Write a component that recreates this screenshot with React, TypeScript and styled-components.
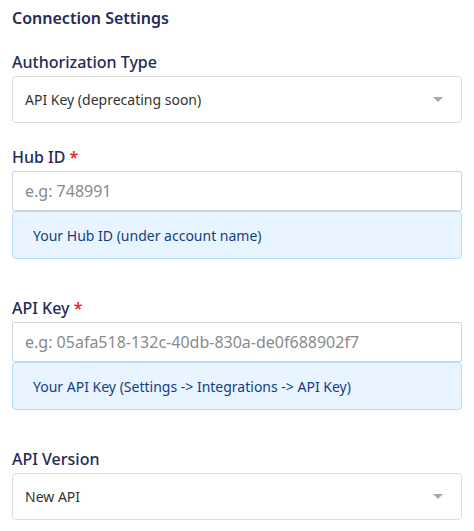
import {FC} from 'react';
import styled, {createGlobalStyle} from 'styled-components';

const Global = createGlobalStyle`
    body {
        margin: 0;
        background: #ffffff;
        font-family: "Noto Sans", "Open Sans", sans-serif;
    }
`;

const Page = styled.div`
    padding: 6px 12px 0 12px;
    display: flex;
    flex-direction: column;
`;

const Title = styled.div`
    font-size: 16px;
    font-weight: 600;
    line-height: 24px;
    color: #262a55;
    margin-bottom: 20px;
`;

const Field = styled.div<{gap?: number}>`
    display: flex;
    flex-direction: column;
    margin-bottom: ${p => p.gap ?? 0}px;
`;

const Label = styled.div`
    font-size: 16px;
    font-weight: 500;
    line-height: 24px;
    color: #262a55;
    margin-bottom: 2px;
    span {
        color: #e8262b;
        font-weight: 600;
    }
`;

const Select = styled.div`
    height: 47px;
    box-sizing: border-box;
    border: 1px solid #dedede;
    border-radius: 4px;
    display: flex;
    align-items: center;
    justify-content: space-between;
    padding: 0 18px 0 12px;
    font-size: 14px;
    color: #333333;
`;

const Arrow = styled.div`
    width: 0;
    height: 0;
    border-left: 5px solid transparent;
    border-right: 5px solid transparent;
    border-top: 5px solid #a9a9a9;
`;

const Input = styled.input`
    height: 40px;
    box-sizing: border-box;
    border: 1px solid #ccd5df;
    border-radius: 2px;
    padding: 0 12px;
    font-family: inherit;
    font-size: 16px;
    color: #333333;
    outline: none;
    &::placeholder {
        color: #8a8a8a;
    }
`;

const Help = styled.div`
    height: 48px;
    box-sizing: border-box;
    background: #e8f4ff;
    border: 1px solid #b8dcfb;
    border-radius: 4px;
    display: flex;
    align-items: center;
    padding: 0 20px;
    font-size: 14px;
    color: #123f84;
`;

const App: FC = () => {
    return (
        <Page>
            <Global />
            <Title>Connection Settings</Title>

            <Field gap={22}>
                <Label>Authorization Type</Label>
                <Select>
                    API Key (deprecating soon)
                    <Arrow />
                </Select>
            </Field>

            <Field gap={37}>
                <Label>Hub ID <span>*</span></Label>
                <Input placeholder="e.g: 748991" />
                <Help>Your Hub ID (under account name)</Help>
            </Field>

            <Field gap={37}>
                <Label>API Key <span>*</span></Label>
                <Input placeholder="e.g: 05afa518-132c-40db-830a-de0f688902f7" />
                <Help>Your API Key (Settings -&gt; Integrations -&gt; API Key)</Help>
            </Field>

            <Field>
                <Label>API Version</Label>
                <Select>
                    New API
                    <Arrow />
                </Select>
            </Field>
        </Page>
    );
};
export default App;
